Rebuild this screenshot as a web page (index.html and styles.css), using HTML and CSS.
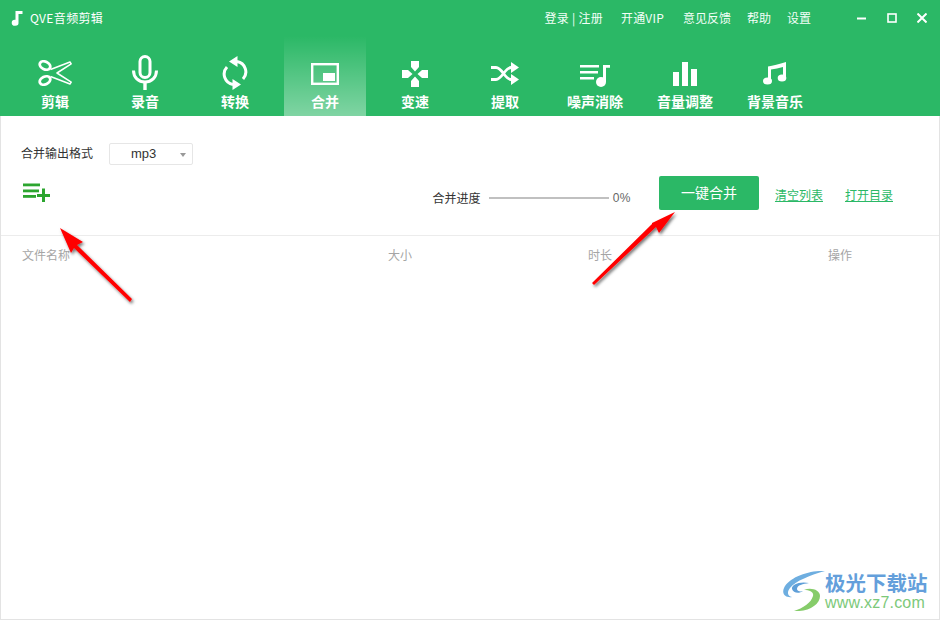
FILE: index.html
```html
<!DOCTYPE html>
<html lang="zh">
<head>
<meta charset="utf-8">
<title>QVE音频剪辑</title>
<link rel="stylesheet" href="styles.css">
</head>
<body>
<div class="app">
  <header class="head">
    <div class="titlebar">
      <svg class="logo" width="14" height="16" viewBox="0 0 14 16"><path d="M5.500 1h7v3H8.500v8.500A3.400 3 0 1 1 5.500 9.800z" fill="#fff"/></svg>
      <span class="appname">QVE音频剪辑</span>
      <nav class="topnav">
        <span class="login">登录 | 注册</span>
        <span class="vip">开通VIP</span>
        <span>意见反馈</span>
        <span>帮助</span>
        <span>设置</span>
      </nav>
      <div class="winctl">
        <svg width="10" height="10" viewBox="0 0 10 10"><path d="M0 5.500h9" stroke="#fff" stroke-width="2"/></svg>
        <svg width="10" height="10" viewBox="0 0 10 10"><rect x="1" y="1" width="8" height="8" fill="none" stroke="#fff" stroke-width="1.600"/></svg>
        <svg width="10" height="10" viewBox="0 0 10 10"><path d="M.5.5l9 9M9.500.5l-9 9" stroke="#fff" stroke-width="2"/></svg>
      </div>
    </div>
    <div class="tabs">
      <div class="tab">
        <div class="ico">
          <svg width="34" height="26" viewBox="0 0 34 26" fill="none" stroke="#fff"><ellipse cx="7" cy="5.500" rx="5.500" ry="3.800" transform="rotate(25 7 5.500)" stroke-width="2.800"/><ellipse cx="7" cy="20.500" rx="5.500" ry="3.800" transform="rotate(-25 7 20.500)" stroke-width="2.800"/><path d="M12.500 9.500L32 2l1.200 1.800L19 13l14.200 9.200L32 24 12.500 16.500" stroke-width="1.500" stroke-linejoin="round"/></svg>
        </div>
        <span>剪辑</span>
      </div>
      <div class="tab">
        <div class="ico">
          <svg width="26" height="36" viewBox="0 0 26 36" fill="none" stroke="#fff"><rect x="8" y="1.500" width="10" height="21" rx="5" stroke-width="3"/><path d="M1.500 15.500c0 7 5 11.500 11.500 11.500s11.500-4.500 11.500-11.500" stroke-width="3"/><path d="M13 27v8" stroke-width="3.400"/></svg>
        </div>
        <span>录音</span>
      </div>
      <div class="tab">
        <div class="ico">
          <svg width="26" height="34" viewBox="0 0 26 34" fill="none" stroke="#fff" stroke-width="3"><path d="M15 5.500A10.500 10.500 0 0 1 21 23"/><path d="M11 28.500A10.500 10.500 0 0 1 5 11"/><path d="M7 5.500L15.500 0v11zM19 28.500L10.500 23v11z" fill="#fff" stroke="none"/></svg>
        </div>
        <span>转换</span>
      </div>
      <div class="tab active">
        <div class="ico">
          <svg class="pip" width="28" height="22" viewBox="0 0 28 22" fill="none" stroke="#fff" stroke-width="2.400"><rect x="1.200" y="1.200" width="25.600" height="19.600"/><rect x="12" y="10" width="12" height="8" fill="#fff" stroke="none"/></svg>
        </div>
        <span>合并</span>
      </div>
      <div class="tab">
        <div class="ico">
          <svg class="pad" width="26" height="26" viewBox="0 0 26 26" fill="#fff"><path d="M9 0h8v6l-4 4.500L9 6zM9 26h8v-6l-4-4.500L9 20zM0 9v8h6l4.500-4L6 9zM26 9v8h-6l-4.500-4L20 9z"/></svg>
        </div>
        <span>变速</span>
      </div>
      <div class="tab">
        <div class="ico">
          <svg width="28" height="23" viewBox="0 0 28 23" fill="none" stroke="#fff" stroke-width="2.800"><path d="M0 5.500h5c6 0 9 12 15 12h2M0 17.500h5c6 0 9-12 15-12h2"/><path d="M20 0l8 5.500-8 5.500zM20 12l8 5.500-8 5.500z" fill="#fff" stroke="none"/></svg>
        </div>
        <span>提取</span>
      </div>
      <div class="tab">
        <div class="ico">
          <svg class="noise" width="30" height="22" viewBox="0 0 30 22" fill="#fff"><path d="M0 0h19v2.400H0zM0 6h18v2.400H0zM0 12h14v2.400H0zM23 0h7v2.800h-4V17h-3z"/><circle cx="21" cy="17" r="5"/></svg>
        </div>
        <span>噪声消除</span>
      </div>
      <div class="tab">
        <div class="ico">
          <svg class="levels" width="24" height="24" viewBox="0 0 24 24" fill="#fff"><rect y="10" width="6" height="14"/><rect x="9" width="6" height="24"/><rect x="18" y="7" width="6" height="17"/></svg>
        </div>
        <span>音量调整</span>
      </div>
      <div class="tab">
        <div class="ico">
          <svg width="24" height="24" viewBox="0 0 24 24" fill="#fff"><path d="M5 5.500C10 5 16 3 23 1v16h-3V6c-4 1-8 2-12 2.500V19H5z"/><ellipse cx="4.500" cy="20" rx="4.500" ry="3.500"/><ellipse cx="19" cy="17" rx="4.300" ry="3.500"/></svg>
        </div>
        <span>背景音乐</span>
      </div>
    </div>
  </header>

  <main class="main">
    <div class="format">
      <span class="format-label">合并输出格式</span>
      <div class="select"><span>mp3</span><i class="caret"></i></div>
    </div>
    <div class="toolbar">
      <svg class="addicon" width="28" height="20" viewBox="0 0 28 20" fill="#2ca52f"><rect width="17" height="2.800" y=".5"/><rect y="6.500" width="16" height="2.800"/><rect y="12" width="13" height="2.800"/><rect x="14" y="11" width="13" height="3"/><rect x="19" y="5.500" width="3" height="13.500"/></svg>
      <div class="progress">
        <span class="progress-label">合并进度</span>
        <div class="bar"></div>
        <span class="pct">0%</span>
      </div>
      <button class="merge">一键合并</button>
      <a class="link first">清空列表</a>
      <a class="link">打开目录</a>
    </div>
    <div class="cols">
      <span>文件名称</span>
      <span>大小</span>
      <span>时长</span>
      <span>操作</span>
    </div>
  </main>

  <svg class="arrows" width="940" height="620" viewBox="0 0 940 620">
    <defs><filter id="sh" x="-30%" y="-30%" width="160%" height="160%"><feDropShadow dx="1.500" dy="2" stdDeviation="1.800" flood-color="#000" flood-opacity=".55"/></filter></defs>
    <g fill="#f00" filter="url(#sh)">
      <path d="M60 228L83 242 77 245 132 299 130 302 74 248 71 253z"/>
      <path d="M675 212L659 233 656 227 594 285 592 283 652 224 652 223z"/>
    </g>
  </svg>

  <div class="mark">
    <svg class="mark-logo" width="44" height="40" viewBox="0 0 44 40" fill="none">
      <path d="M43 0C28-1 7 6 2 17c-3 7 3 10 8 9-5-1-5-5-2-9C13 10 29 4 43 0z" fill="#6eaee0"/>
      <path d="M27 12c-10-2-18 2-17 6 1 4 7 5 11 2-3 1-6 0-6-2 0-4 6-5 12-6z" fill="#5f9fd8"/>
      <path d="M12 40c14 1 26-6 26-15 0-6-9-9-16-6 6 0 10 2 9 6-2 7-10 12-19 15z" fill="#86cc6a"/>
    </svg>
    <div class="mark-text">
      <div class="mark-cn">极光下载站</div>
      <div class="mark-en">www.xz7.com</div>
    </div>
  </div>
</div>
</body>
</html>
```
FILE: styles.css
```css
* { box-sizing: border-box; }
html, body { margin: 0; padding: 0; }
body {
  width: 940px;
  height: 620px;
  overflow: hidden;
  background: #fff;
  font-family: "Noto Sans CJK SC", "Liberation Sans", sans-serif;
  font-size: 12px;
}
.app {
  position: relative;
  width: 940px;
  height: 620px;
  display: flex;
  flex-direction: column;
  border: 1px solid #e3e3e3;
  border-top: 0;
}
.head {
  height: 116px;
  margin: 0 -1px;
  background: #2bb866;
  color: #fff;
  flex: none;
  display: flex;
  flex-direction: column;
}
.titlebar {
  height: 40px;
  display: flex;
  align-items: center;
  padding: 0 13px 5px 10px;
  flex: none;
}
.logo { flex: none; }
.appname { margin-left: 6px; letter-spacing: .35px; }
.topnav {
  margin-left: auto;
  display: flex;
  gap: 16px;
  color: #f3fff8;
}
.login { letter-spacing: .25px; margin-right: 2px; }
.vip { letter-spacing: .2px; margin-right: 3px; }
.winctl {
  margin-left: 46px;
  display: flex;
  gap: 20px;
}
.tabs {
  flex: 1;
  display: flex;
  gap: 8px;
  padding-left: 14px;
}
.tab {
  width: 82px;
  display: flex;
  flex-direction: column;
  align-items: center;
  padding-top: 15px;
  font-size: 14px;
  font-weight: 700;
  line-height: 20px;
}
.ico {
  height: 36px;
  display: flex;
  align-items: center;
  justify-content: center;
}
.pip { margin-top: 2px; }
.pad { margin-top: 2px; }
.noise { margin-top: 5px; }
.levels { margin-top: 1px; }
.tab.active {
  margin-top: -4px;
  padding-top: 19px;
  background: linear-gradient(to bottom, rgba(255,255,255,0) 0%, rgba(255,255,255,.4) 100%);
}
.main {
  flex: 1;
  display: flex;
  flex-direction: column;
  min-height: 0;
}
.format {
  display: flex;
  align-items: center;
  height: 22px;
  margin-top: 27px;
  padding-left: 20px;
  color: #333;
}
.format-label { width: 88px; margin-top: -4px; }
.select {
  width: 84px;
  height: 22px;
  border: 1px solid #e6e6e6;
  border-radius: 2px;
  display: flex;
  align-items: center;
  padding: 0 0 2px 21px;
  font-family: "Liberation Sans", sans-serif;
  font-size: 13px;
  color: #333;
  position: relative;
}
.caret {
  position: absolute;
  right: 6px;
  top: 9px;
  border: 3px solid transparent;
  border-top: 4px solid #999;
  border-bottom: 0;
}
.toolbar {
  height: 71px;
  display: flex;
  align-items: flex-start;
  padding-left: 22px;
  border-bottom: 1px solid #ececec;
}
.addicon { margin-top: 18px; }
.progress {
  margin-left: auto;
  margin-top: 24px;
  display: flex;
  align-items: center;
  color: #333;
  height: 18px;
}
.progress-label { margin-top: -1px; }
.bar {
  width: 120px;
  height: 2px;
  background: #c0c0c0;
  margin: 0 4px 0 8px;
}
.pct {
  color: #666;
  font-family: "Liberation Sans", sans-serif;
  letter-spacing: .5px;
}
.merge {
  margin: 11px 0 0 28px;
  width: 100px;
  height: 34px;
  border: 0;
  border-radius: 2px;
  background: #2bb866;
  color: #fff;
  font: inherit;
  font-size: 14px;
  padding: 0 0 2px;
}
.link {
  margin: 21px 46px 0 0;
  color: #2bb866;
  text-decoration: underline;
  line-height: 18px;
}
.link.first { margin-left: 16px; margin-right: 22px; }
.cols {
  display: grid;
  grid-template-columns: 366px 200px 240px 1fr;
  padding: 10px 0 0 21px;
  color: #a5a5a5;
  line-height: 18px;
}
.arrows {
  position: absolute;
  left: -1px;
  top: 0;
  pointer-events: none;
}
.mark {
  position: absolute;
  right: 10px;
  bottom: 8px;
  display: flex;
  align-items: center;
}
.mark-text { width: 104px; margin-left: -1px; }
.mark-cn {
  font-size: 20.500px;
  font-weight: 700;
  line-height: 21px;
  color: #649fdb;
  white-space: nowrap;
}
.mark-en {
  margin-top: 2px;
  font-family: "Liberation Sans", sans-serif;
  font-size: 16px;
  line-height: 16px;
  color: #7cc97a;
  letter-spacing: .2px;
  white-space: nowrap;
}
```
